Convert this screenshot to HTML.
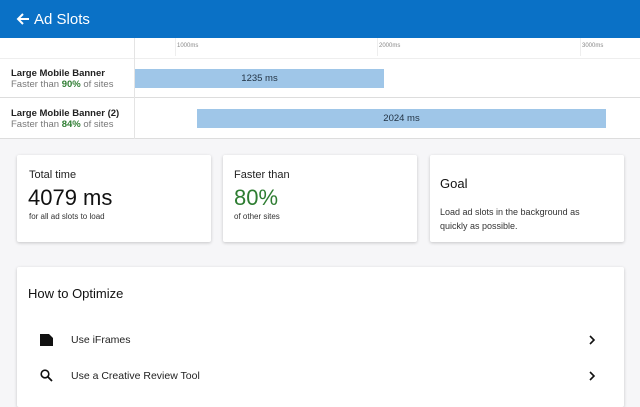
<!DOCTYPE html>
<html><head><style>
*{margin:0;padding:0;box-sizing:border-box}
body{width:640px;height:400px;overflow:hidden;background:#f6f6f8;font-family:"Liberation Sans",sans-serif;position:relative;color:#222}
.hdr{position:absolute;left:0;top:0;width:640px;height:38px;background:#0a71c6;color:#fff;font-size:15px}
.hdr span{position:absolute;left:34px;top:11px}
.tl{position:absolute;left:0;top:38px;width:640px;height:101px;background:#fff}
.abs{position:absolute}
.card{position:absolute;background:#fff;box-shadow:0 1px 3px rgba(0,0,0,.2);border-radius:2px}
.tick{position:absolute;top:5px;font-size:6px;color:#888}
.lbl b{font-size:9.5px;color:#222;display:block}
.lbl{position:absolute;left:11px;font-size:9.5px;color:#777}
.bar{position:absolute;background:#9fc6e8;font-size:9.5px;color:#234;text-align:center;line-height:19px}
</style></head><body>
<div class="hdr"><svg class="abs" style="left:16px;top:12px" width="14" height="14" viewBox="0 0 14 14"><path d="M13 7H2M7 2L2 7l5 5" stroke="#fff" stroke-width="2" fill="none"/></svg><span>Ad Slots</span></div>
<div class="tl">
<div class="abs" style="left:0;top:20px;width:640px;height:1px;background:#eee"></div>
<div class="abs" style="left:0;top:59px;width:640px;height:1px;background:#ddd"></div>
<div class="abs" style="left:0;top:100px;width:640px;height:1px;background:#ddd"></div>
<div class="abs" style="left:134px;top:0;width:1px;height:101px;background:#e4e4e4"></div>
<div class="abs" style="left:175px;top:0;width:1px;height:18px;background:#eee"></div>
<div class="abs" style="left:377px;top:0;width:1px;height:18px;background:#eee"></div>
<div class="abs" style="left:580px;top:0;width:1px;height:18px;background:#eee"></div>
<div class="tick" style="left:177px">1000ms</div>
<div class="tick" style="left:379px">2000ms</div>
<div class="tick" style="left:582px">3000ms</div>
<div class="lbl" style="top:30px"><b>Large Mobile Banner</b>Faster than <span style="color:#2e7d32;font-weight:bold">90%</span> of sites</div>
<div class="lbl" style="top:70px"><b>Large Mobile Banner (2)</b>Faster than <span style="color:#2e7d32;font-weight:bold">84%</span> of sites</div>
<div class="bar" style="left:135px;top:31px;width:249px;height:19px">1235 ms</div>
<div class="bar" style="left:197px;top:71px;width:409px;height:19px">2024 ms</div>
</div>
<div class="card" style="left:17px;top:155px;width:194px;height:87px">
<div class="abs" style="left:12px;top:14px;font-size:11px">Total time</div>
<div class="abs" style="left:11px;top:30px;font-size:22px;color:#111">4079 ms</div>
<div class="abs" style="left:12px;top:57px;font-size:8px;color:#333">for all ad slots to load</div></div>
<div class="card" style="left:223px;top:155px;width:194px;height:87px">
<div class="abs" style="left:11px;top:14px;font-size:11px">Faster than</div>
<div class="abs" style="left:11px;top:30px;font-size:22px;color:#2e7d32">80%</div>
<div class="abs" style="left:11px;top:57px;font-size:8px;color:#333">of other sites</div></div>
<div class="card" style="left:430px;top:155px;width:194px;height:87px">
<div class="abs" style="left:10px;top:21px;font-size:13px;color:#111">Goal</div>
<div class="abs" style="left:10px;top:50px;font-size:9px;color:#333;line-height:14px;width:165px">Load ad slots in the background as quickly as possible.</div></div>
<div class="card" style="left:17px;top:267px;width:607px;height:140px">
<div class="abs" style="left:11px;top:19px;font-size:13px;color:#111">How to Optimize</div>
<svg class="abs" style="left:23px;top:67px" width="13" height="12" viewBox="0 0 13 12"><path d="M0 0H9L13 4V12H0Z" fill="#111"/></svg>
<div class="abs" style="left:54px;top:67px;font-size:10.5px">Use iFrames</div>
<svg class="abs" style="left:23px;top:102px" width="13" height="13" viewBox="0 0 13 13"><circle cx="5" cy="5" r="3.8" stroke="#111" stroke-width="1.6" fill="none"/><path d="M8 8L12 12" stroke="#111" stroke-width="1.8"/></svg>
<div class="abs" style="left:54px;top:103px;font-size:10.5px">Use a Creative Review Tool</div>
<svg class="abs" style="left:571px;top:68px" width="8" height="10" viewBox="0 0 8 10"><path d="M2 1l4 4-4 4" stroke="#111" stroke-width="1.6" fill="none"/></svg>
<svg class="abs" style="left:571px;top:104px" width="8" height="10" viewBox="0 0 8 10"><path d="M2 1l4 4-4 4" stroke="#111" stroke-width="1.6" fill="none"/></svg>
</div>
</body></html>
